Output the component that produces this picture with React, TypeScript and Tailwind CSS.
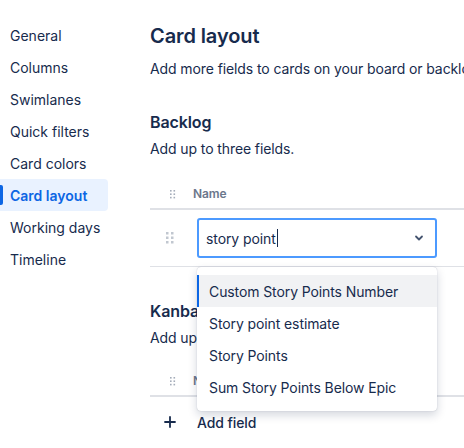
import React from 'react';

const NAV = ['General', 'Columns', 'Swimlanes', 'Quick filters', 'Card colors', 'Card layout', 'Working days', 'Timeline'];

const OPTIONS = ['Custom Story Points Number', 'Story point estimate', 'Story Points', 'Sum Story Points Below Epic'];

const Grip: React.FC<{ big?: boolean }> = ({ big }) => (
    <svg width={big ? 8 : 6} height={big ? 12 : 9} viewBox={big ? '0 0 8 12' : '0 0 6 9'} className={big ? 'fill-[#C1C7D0]' : 'fill-[#A5ADBA]'}>
        {[0, 1, 2].map(r =>
            [0, 1].map(c => (
                big
                    ? <rect key={`${r}${c}`} x={c * 5} y={r * 4.5} width={2.5} height={2.5} />
                    : <rect key={`${r}${c}`} x={c * 3.5} y={r * 3.4} width={1.6} height={1.6} />
            ))
        )}
    </svg>
);

const Header: React.FC = () => (
    <div className="flex items-center h-[30px] border-b-2 border-[#DFE1E6]">
        <div className="w-[43px] flex justify-center pl-[2px]"><Grip /></div>
        <span className="text-[12px] font-semibold text-[#6B778C]">Name</span>
    </div>
);

export default function App() {
    return (
        <div className="w-[464px] h-[448px] overflow-hidden bg-white text-[#172B4D] flex" style={{ fontFamily: 'Inter, "Noto Sans", sans-serif' }}>
            {/* Sidebar */}
            <nav className="w-[108px] shrink-0 pt-[19px] flex flex-col">
                {NAV.map(item => {
                    const active = item === 'Card layout';
                    return (
                        <div key={item} className={`relative h-[32px] flex items-center pl-[10px] text-[14px] rounded-r-[4px] ${active ? 'bg-[#E9F2FF] text-[#0C66E4] font-semibold' : ''}`}>
                            {active && <span className="absolute left-0 top-[6px] bottom-[6px] w-[3px] rounded-r-[2px] bg-[#0C66E4]" />}
                            {item}
                        </div>
                    );
                })}
            </nav>

            {/* Main */}
            <main className="relative ml-[42px] w-[400px] shrink-0 pt-[24px] whitespace-nowrap tracking-[-0.1px]">
                <h1 className="text-[20px] leading-[24px] font-semibold">Card layout</h1>
                <p className="mt-[11px] text-[14px] leading-[20px]">Add more fields to cards on your board or backlog.</p>

                <h2 className="mt-[33px] text-[16px] leading-[20px] font-semibold">Backlog</h2>
                <p className="mt-[7px] text-[14px] leading-[20px]">Add up to three fields.</p>

                <div className="mt-[21px]">
                    <Header />
                    <div className="flex items-center h-[57px] border-b border-[#DFE1E6]">
                        <div className="w-[47px] flex justify-center pr-[8px]"><Grip big /></div>
                        <div className="relative w-[240px] h-[40px] border-2 border-[#4C9AFF] rounded-[3px] flex items-center pl-[7px] pr-[10px]">
                            <span className="text-[14px]">story point</span>
                            <span className="w-px h-[18px] bg-[#172B4D] ml-px" />
                            <svg className="ml-auto" width="12" height="12" viewBox="0 0 12 12" fill="none">
                                <path d="M3 4.5L6 7.5L9 4.5" stroke="#44546F" strokeWidth="1.8" strokeLinecap="round" strokeLinejoin="round" />
                            </svg>
                        </div>
                    </div>
                </div>

                <h2 className="mt-[34px] text-[16px] leading-[20px] font-semibold">Kanban board</h2>
                <p className="mt-[7px] text-[14px] leading-[20px]">Add up to three fields.</p>

                <div className="mt-[19px]">
                    <Header />
                    <div className="flex items-center h-[50px]">
                        <div className="w-[39px] flex justify-center">
                            <svg width="12" height="12" viewBox="0 0 12 12">
                                <path d="M6 1V11M1 6H11" stroke="#172B4D" strokeWidth="1.8" strokeLinecap="round" />
                            </svg>
                        </div>
                        <span className="text-[14px] font-medium ml-[8px]">Add field</span>
                    </div>
                </div>

                {/* Dropdown menu */}
                <div className="absolute left-[47px] top-[267px] w-[240px] py-[8px] bg-white rounded-[4px] shadow-[0_4px_10px_rgba(9,30,66,0.18),0_0_1px_rgba(9,30,66,0.3)]">
                    {OPTIONS.map((opt, i) => (
                        <div key={opt} className={`relative h-[32px] flex items-center pl-[12px] text-[14px] ${i === 0 ? 'bg-[#F1F2F4]' : ''}`}>
                            {i === 0 && <span className="absolute left-0 top-0 bottom-0 w-[2px] bg-[#0C66E4]" />}
                            {opt}
                        </div>
                    ))}
                </div>
            </main>
        </div>
    );
}
